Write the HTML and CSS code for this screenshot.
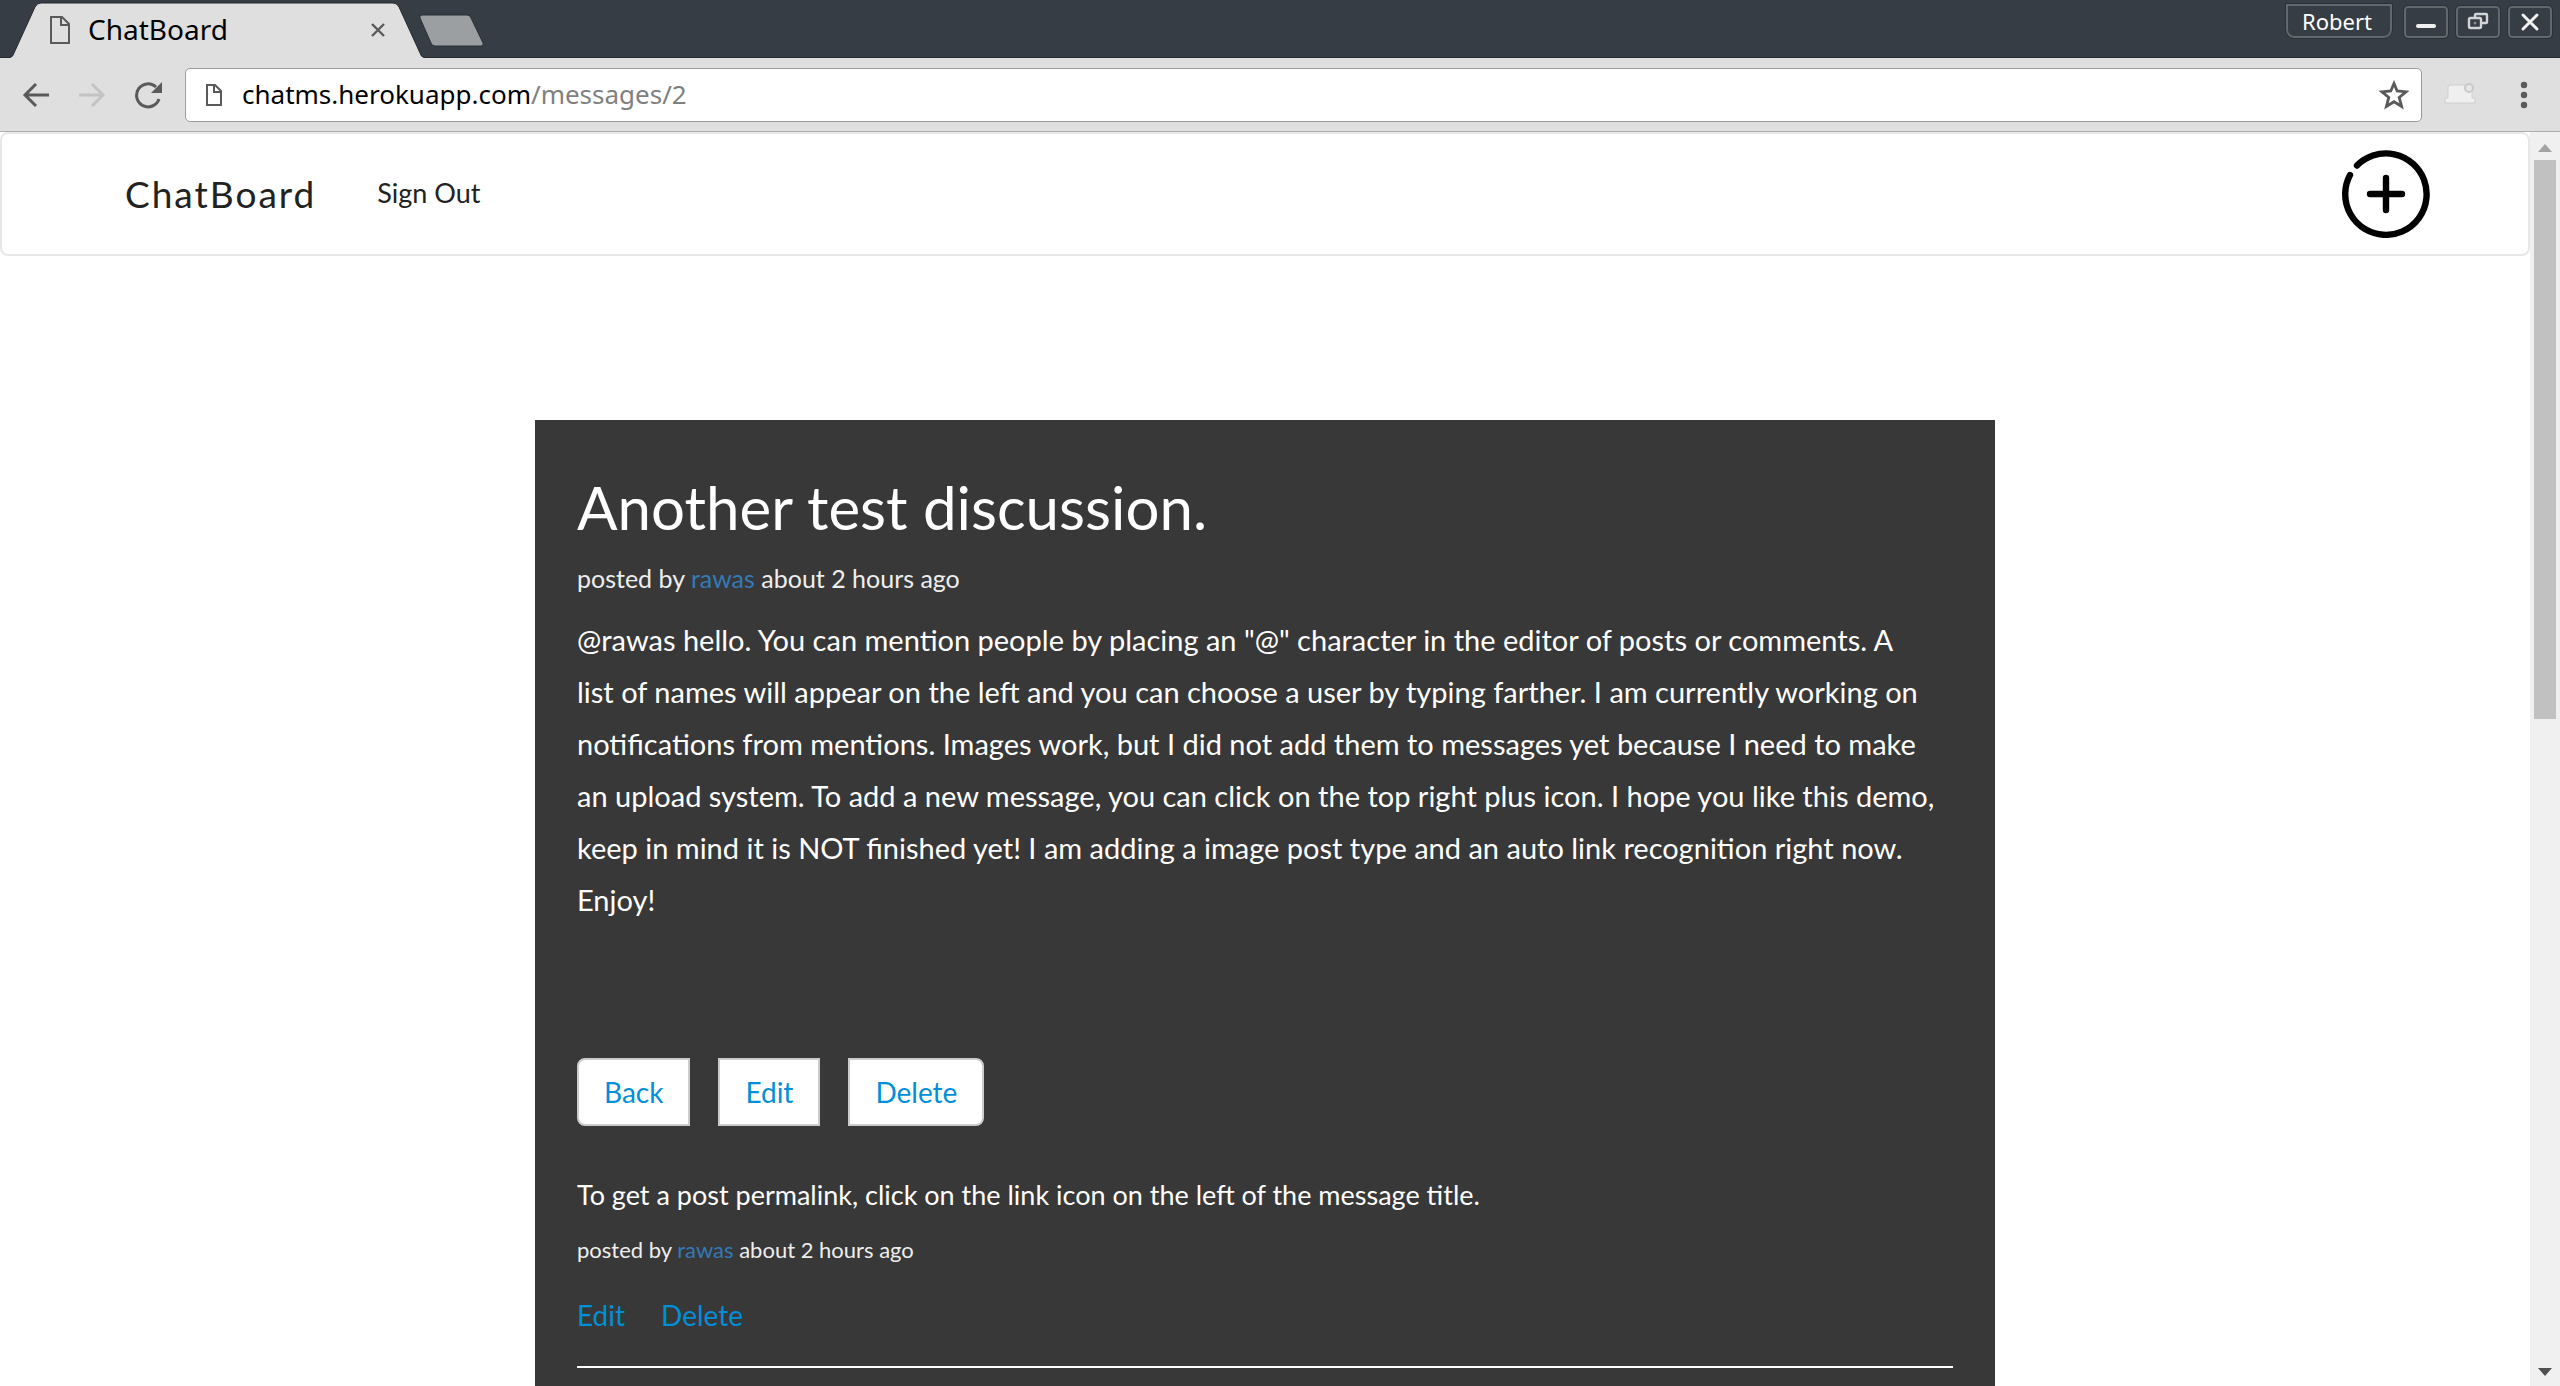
FILE: index.html
```html
<!DOCTYPE html>
<html lang="en">
<head>
<meta charset="utf-8">
<title>ChatBoard</title>
<link rel="stylesheet" href="styles.css">
</head>
<body>
<header class="titlebar">
  <div class="tab">
    <svg class="tab-shape" width="414" height="56" viewBox="0 0 414 56" aria-hidden="true"><path d="M0 56 Q3 55 4 51 L25 5 Q27 1 31 1 H383 Q387 1 389 5 L410 51 Q411 55 414 56Z" fill="#dfdfdf"/><path d="M0 55 Q3 55 4 51 L25 5 Q27 1 31 1 H383 Q387 1 389 5 L410 51 Q411 55 414 55" fill="none" stroke="#252a2e" stroke-width="1"/></svg>
    <svg class="tab-icon" width="20" height="28" viewBox="0 0 20 28" aria-hidden="true"><path d="M1 1H12L19 8V27H1Z M11 1V9H19" fill="none" stroke="#5a5a5a" stroke-width="2"/></svg>
    <span class="tab-title">ChatBoard</span>
    <button class="tab-close" aria-label="Close tab"><svg width="16" height="16" viewBox="0 0 16 16"><path d="M2 2L14 14M14 2L2 14" stroke="#5a5a5a" stroke-width="2.4"/></svg></button>
  </div>
  <button class="new-tab" aria-label="New tab"><svg width="66" height="34" viewBox="0 0 66 34"><path d="M4 1H49Q52 1 53 4L65 29Q66 32 63 32H17Q14 32 13 29L2 4Q1 1 4 1Z" fill="#9b9fa1" stroke="#2b3035"/></svg></button>
  <div class="window-controls">
    <button class="profile">Robert</button>
    <button class="win" aria-label="Minimize"><svg width="28" height="24" viewBox="0 0 28 24"><path d="M6 16H22" stroke="#f0f0f0" stroke-width="4" stroke-linecap="round"/></svg></button>
    <button class="win" aria-label="Restore"><svg width="28" height="24" viewBox="0 0 28 24"><g fill="none" stroke="#d2d5d7" stroke-width="2.400"><path d="M11 7V5Q11 4 12 4H22Q23 4 23 5V12Q23 13 22 13H18"/><rect x="5" y="8" width="12" height="10" rx="1.500"/></g><circle cx="11" cy="13" r="1.500" fill="#858a8e"/></svg></button>
    <button class="win" aria-label="Close"><svg width="28" height="24" viewBox="0 0 28 24"><path d="M7 5L21 19M21 5L7 19" stroke="#f0f0f0" stroke-width="3" stroke-linecap="round"/></svg></button>
  </div>
</header>
<div class="toolbar">
  <button class="tool" aria-label="Back"><svg width="28" height="28" viewBox="0 0 28 28"><path d="M14 3L3 14L14 25M3 14H27" fill="none" stroke="#5a5a5a" stroke-width="3"/></svg></button>
  <button class="tool" aria-label="Forward"><svg width="28" height="28" viewBox="0 0 28 28"><path d="M14 3L25 14L14 25M25 14H1" fill="none" stroke="#c3c3c3" stroke-width="3"/></svg></button>
  <button class="tool" aria-label="Reload"><svg width="28" height="28" viewBox="0 0 28 28"><path d="M25 18A11.500 11.500 0 1 1 22 6" fill="none" stroke="#5a5a5a" stroke-width="3"/><path d="M28 1V12H17Z" fill="#5a5a5a"/></svg></button>
  <div class="address">
    <svg width="16" height="22" viewBox="0 0 16 22" aria-hidden="true"><path d="M1 1H9L15 7V21H1Z M8 1V8H15" fill="none" stroke="#5a5a5a" stroke-width="2"/></svg>
    <span class="url">chatms.herokuapp.com<span class="path">/messages/2</span></span>
    <button class="star" aria-label="Bookmark"><svg width="30" height="30" viewBox="0 0 30 30"><path d="M15 3.500L18.200 11L27 11.800L20.200 17.400L22.600 26.500L15 21.700L7.400 26.500L9.800 17.400L3 11.800L11.800 11Z" fill="none" stroke="#5a5a5a" stroke-width="2.800"/></svg></button>
  </div>
  <button class="extension" aria-label="Extension"><svg width="32" height="24" viewBox="0 0 32 24"><path d="M4 4Q4 2 6 2H26Q28 2 28 4V15H31V20H1V15H4Z" fill="#efefef" stroke="#cfcfcf"/><circle cx="25" cy="5" r="4" fill="#e6e6e6" stroke="#cacaca" stroke-width="2"/></svg></button>
  <button class="menu" aria-label="Menu"><svg width="8" height="28" viewBox="0 0 8 28"><g fill="#5a5a5a"><circle cx="4" cy="4" r="3.200"/><circle cx="4" cy="14" r="3.200"/><circle cx="4" cy="24" r="3.200"/></g></svg></button>
</div>
<div class="viewport">
  <div class="page">
    <nav class="navbar">
      <a class="brand" href="#">ChatBoard</a>
      <a class="signout" href="#">Sign Out</a>
      <a class="add" href="#" aria-label="New message"><svg width="88" height="88" viewBox="0 0 88 88"><path d="M15 15.500A40.700 40.700 0 1 1 8 25M44 28V60M28 44H60" fill="none" stroke="#000" stroke-width="6.400" stroke-linecap="round"/></svg></a>
    </nav>
    <main class="card">
      <h1>Another test discussion.</h1>
      <p class="meta">posted by <a href="#">rawas</a> about 2 hours ago</p>
      <p class="body">@rawas hello. You can mention people by placing an "@" character in the editor of posts or comments. A<br>
      list of names will appear on the left and you can choose a user by typing farther. I am currently working on<br>
      notifications from mentions. Images work, but I did not add them to messages yet because I need to make<br>
      an upload system. To add a new message, you can click on the top right plus icon. I hope you like this demo,<br>
      keep in mind it is NOT finished yet! I am adding a image post type and an auto link recognition right now.<br>
      Enjoy!</p>
      <div class="actions">
        <button>Back</button>
        <button>Edit</button>
        <button>Delete</button>
      </div>
      <section class="comment">
        <p class="comment-text">To get a post permalink, click on the link icon on the left of the message title.</p>
        <p class="comment-meta">posted by <a href="#">rawas</a> about 2 hours ago</p>
        <div class="comment-links"><a href="#">Edit</a><a href="#">Delete</a></div>
      </section>
    </main>
  </div>
  <div class="scrollbar" aria-hidden="true">
    <svg width="30" height="28" viewBox="0 0 30 28"><path d="M8 20L15 12L22 20Z" fill="#a3a3a3"/></svg>
    <div class="thumb"></div>
    <div class="rest"></div>
    <svg width="30" height="28" viewBox="0 0 30 28"><path d="M8 10L15 18L22 10Z" fill="#505050"/></svg>
  </div>
</div>
</body>
</html>
```
FILE: styles.css
```css
* { box-sizing: border-box; }
body {
  margin: 0;
  height: 100vh;
  display: flex;
  flex-direction: column;
  overflow: hidden;
  background: #fff;
  font-family: Lato, "Liberation Sans", sans-serif;
}
button {
  margin: 0;
  padding: 0;
  border: 0;
  background: none;
  color: inherit;
  font: inherit;
}
svg { display: block; flex: none; }
a { text-decoration: none; }
h1, p { margin: 0; font-weight: 400; }

.titlebar {
  flex: none;
  height: 58px;
  display: flex;
  background: #363d44;
  border-bottom: 1px solid #252a2e;
  padding: 0 8px 0 10px;
  font-family: "Noto Sans", sans-serif;
}
.tab {
  position: relative;
  width: 414px;
  height: 58px;
  padding: 1px 38px 0 40px;
  display: flex;
  align-items: center;
}
.tab-shape { position: absolute; left: 0; bottom: 0; }
.tab-icon, .tab-title, .tab-close { position: relative; }
.tab-title {
  margin-left: 18px;
  padding-bottom: 2px;
  flex: 1;
  font-size: 28px;
  line-height: 40px;
  color: #000;
}
.new-tab { align-self: flex-start; margin: 14px 0 0 -6px; }
.window-controls {
  margin-left: auto;
  display: flex;
  align-items: flex-start;
  gap: 8px;
  padding-top: 6px;
}
.profile {
  height: 34px;
  margin: -2px 4px 0 0;
  padding: 0 18px 0 14px;
  border: 2px solid #62686d;
  border-radius: 0 0 8px 8px;
  outline: 1px solid #2b3035;
  color: #fff;
  font-size: 22px;
  line-height: 30px;
}
.win {
  width: 44px;
  height: 32px;
  display: flex;
  align-items: center;
  justify-content: center;
  border: 2px solid #62686d;
  border-radius: 4px;
  outline: 1px solid #2b3035;
}

.toolbar {
  flex: none;
  height: 74px;
  display: flex;
  align-items: center;
  padding: 0 32px 0 22px;
  background: #dfdfdf;
  border-bottom: 1px solid #aeaeae;
  font-family: "Noto Sans", sans-serif;
}
.tool { margin-right: 28px; }
.address {
  flex: 1;
  height: 54px;
  margin-right: 22px;
  margin-left: -5px;
  display: flex;
  align-items: center;
  padding: 0 12px 0 20px;
  background: #fff;
  border: 1px solid #9b9b9b;
  border-radius: 5px;
}
.url {
  flex: 1;
  margin-left: 20px;
  padding-bottom: 2px;
  font-size: 26px;
  line-height: 36px;
  color: #000;
}
.path { color: #808080; }
.menu { margin-left: 44px; }

.viewport {
  flex: 1;
  min-height: 0;
  display: flex;
}
.page {
  flex: 1;
  overflow: hidden;
}
.navbar {
  display: flex;
  align-items: center;
  height: 124px;
  padding: 0 98px 0 123px;
  border: 2px solid #e7e7e7;
  border-radius: 8px;
}
.brand, .signout { color: #222; }
.brand {
  font-size: 37px;
  line-height: 44px;
  letter-spacing: 2px;
}
.signout {
  margin-left: 61px;
  padding-bottom: 2px;
  font-size: 27px;
  line-height: 40px;
}
.add { margin-left: auto; }

.card {
  width: 1460px;
  max-width: 100%;
  margin: 164px auto 0;
  padding: 51px 42px;
  background: #383838;
  color: #fff;
}
h1 {
  font-size: 60px;
  line-height: 72px;
}
.meta {
  margin-top: 17px;
  font-size: 25px;
  line-height: 36px;
  color: #eee;
}
.meta a, .comment-meta a { color: #337ab7; }
.body {
  margin-top: 18px;
  font-size: 29px;
  line-height: 52px;
}
.actions {
  display: flex;
  gap: 28px;
  margin-top: 132px;
}
.actions button {
  height: 68px;
  padding: 0 25px;
  border: 2px solid #ccc;
  background: #fff;
  color: #008fd8;
  font-size: 28px;
  line-height: 40px;
}
.actions button:first-child { border-radius: 8px 0 0 8px; }
.actions button:last-child { border-radius: 0 8px 8px 0; }
.comment {
  margin-top: 49px;
  padding-bottom: 31px;
  border-bottom: 2px solid #fff;
}
.comment-text {
  font-size: 27px;
  line-height: 40px;
}
.comment-meta {
  margin-top: 19px;
  font-size: 22px;
  line-height: 32px;
  color: #eee;
}
.comment-links {
  display: flex;
  gap: 36px;
  margin-top: 29px;
  font-size: 28px;
  line-height: 40px;
}
.comment-links a { color: #008fd8; }

.scrollbar {
  flex: none;
  width: 30px;
  display: flex;
  flex-direction: column;
  background: #f0f0f0;
}
.thumb {
  flex: 7;
  margin: 0 4px;
  background: #c1c1c1;
}
.rest { flex: 8; }
```
